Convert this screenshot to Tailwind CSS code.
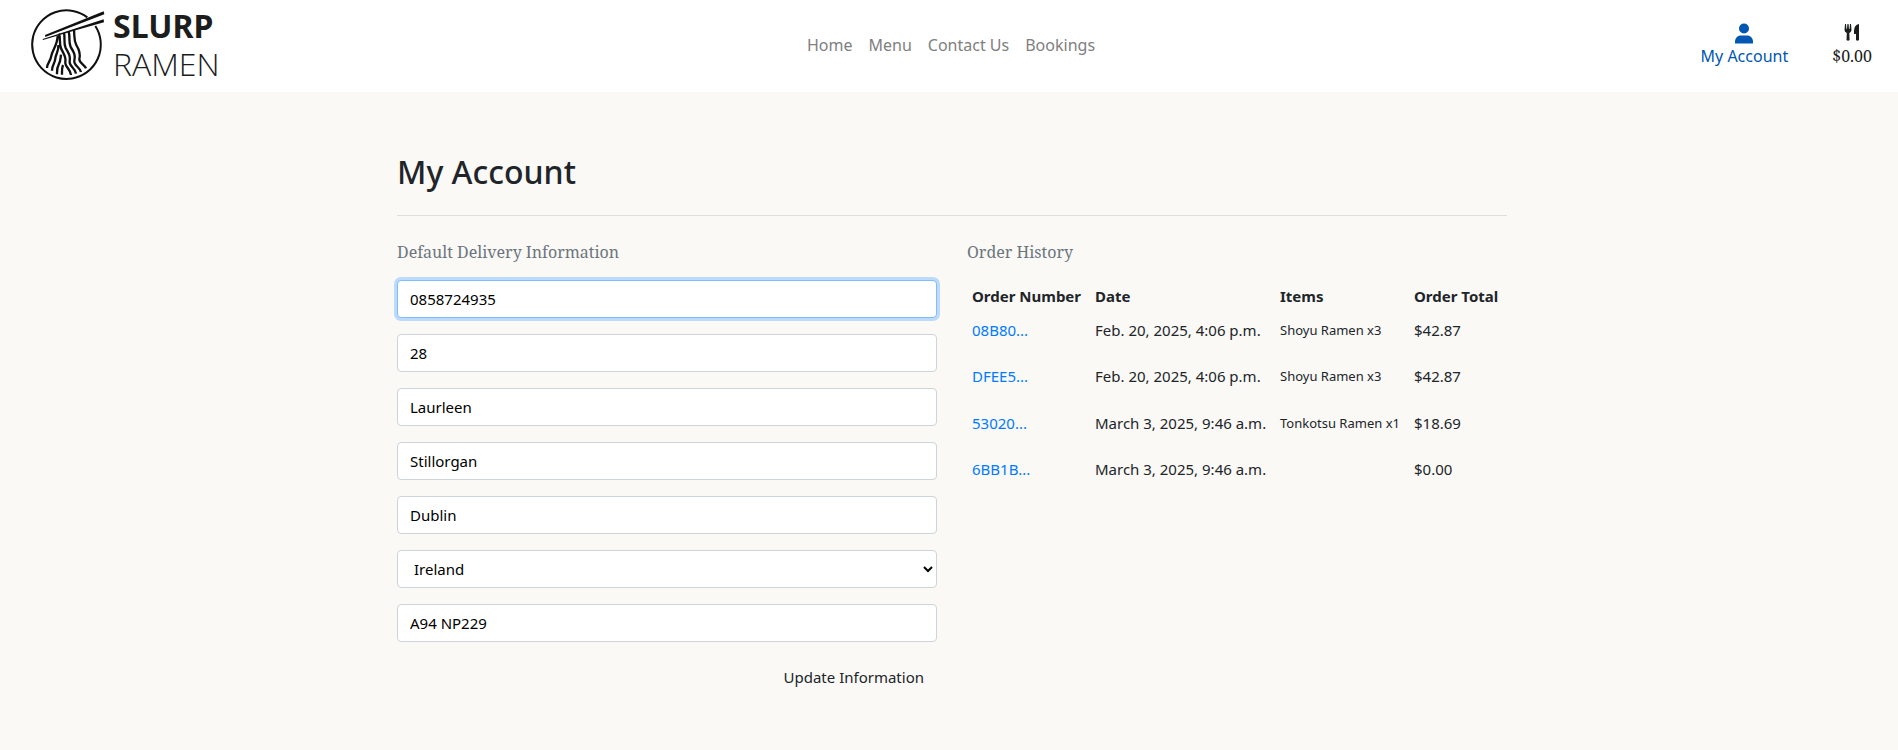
<!DOCTYPE html>
<html lang="en">
<head>
<meta charset="utf-8">
<meta name="viewport" content="width=device-width, initial-scale=1">
<title>Slurp Ramen - My Account</title>
<script src="https://cdn.jsdelivr.net/npm/@tailwindcss/browser@4"></script>
</head>
<body class="min-h-screen bg-[#faf9f6] font-['Noto_Sans',sans-serif] text-base text-[#212529]">
<header class="grid h-[92px] grid-cols-[1fr_auto_1fr] items-center bg-white pb-[2px]">
  <a href="#" class="flex items-center pl-[25px] text-[#1c1d1d]" aria-label="Slurp Ramen">
    <svg class="h-20 w-[85px]" viewBox="0 0 255 240" fill="none" stroke="#111" stroke-width="6" aria-hidden="true">
      <path d="M187 37A103 103 0 1 0 211 63"/>
      <path d="M60 90L236 19L238 28L61 96Z" fill="#111" stroke="none"/>
      <path d="M53 102L100 87L236 43L237 52L147 77L54 105Z" fill="#111" stroke="none"/>
      <path stroke-width="7" d="M98 92C98 118 82 136 79 152C77 170 66 174 66 189M100 120C102 138 92 148 91 160C90 176 81 180 81 197M108 149C106 163 107 169 101 179C95 189 96 197 96 208M114 180C110 190 111 198 111 209M102 86C108 106 102 116 108 130C116 148 124 155 121 170C118 184 137 192 138 210M117 83C121 102 115 114 122 129C132 146 137 154 134 170C132 183 151 189 153 206M131 79C136 98 130 111 137 126C148 143 152 152 148 168C146 181 165 187 168 201M147 75C149 95 146 105 154 120C165 138 167 148 163 162C162 174 179 179 183 190"/>
    </svg>
    <span class="ml-[3px] flex flex-col text-[32px] leading-[38px]">
      <span class="font-bold">SLURP</span>
      <span class="font-['Open_Sans','Noto_Sans',sans-serif] font-light">RAMEN</span>
    </span>
  </a>
  <nav class="flex gap-4 pl-1 text-[#808080]">
    <a href="#">Home</a><a href="#">Menu</a><a href="#">Contact Us</a><a href="#">Bookings</a>
  </nav>
  <div class="flex items-end justify-end gap-11 pr-[26px] leading-6">
    <a href="#" class="flex flex-col items-center text-[#0056b3]">
      <svg class="h-[21px] w-[18px]" viewBox="0 0 18 21" fill="currentColor" aria-hidden="true"><circle cx="9" cy="5.5" r="5"/><path d="M0 20.5V19C0 15 2.5 12.5 6 12.5H12C15.5 12.5 18 15 18 19V20.5Z"/></svg>
      <span>My Account</span>
    </a>
    <a href="#" class="flex flex-col items-center text-[#1c1d1d]">
      <svg class="mb-[3px] h-[17px] w-4" viewBox="0 0 16 17" fill="currentColor" aria-hidden="true"><path d="M1 0H2L2.5 5H3L3.4 0H4.6L5 5H5.5L6 0H7L7.5 6Q7.5 8 5.3 9L5.600 16Q4 17.5 2.5 16L2.8 9Q.5 8 .5 6ZM15 0V16Q13.5 17.5 12 16V10H10V7Q10 1 15 0Z"/></svg>
      <span class="font-['Noto_Serif','Liberation_Serif',serif]">$0.00</span>
    </a>
  </div>
</header>
<main class="mx-auto max-w-[1116px] pl-1.5">
  <h1 class="border-b border-[#e0dfdd] pt-[61px] pb-[24px] text-[32px] leading-[38px] font-medium">My Account</h1>
  <div class="grid grid-cols-2 gap-[30px] pt-[24px]">
    <section>
      <h2 class="font-['Noto_Serif','Liberation_Serif',serif] leading-6 text-[#6c757d]">Default Delivery Information</h2>
      <form class="mt-4 flex flex-col gap-4 text-[15px] text-black">
        <input aria-label="Phone Number" value="0858724935" class="h-[38px] w-full rounded border border-[#80bdff] bg-white px-3 shadow-[0_0_0_3px_#bcdaf9] outline-none">
        <input aria-label="Street Address 1" value="28" class="h-[38px] w-full rounded border border-[#ced4da] bg-white px-3">
        <input aria-label="Street Address 2" value="Laurleen" class="h-[38px] w-full rounded border border-[#ced4da] bg-white px-3">
        <input aria-label="Town or City" value="Stillorgan" class="h-[38px] w-full rounded border border-[#ced4da] bg-white px-3">
        <input aria-label="County" value="Dublin" class="h-[38px] w-full rounded border border-[#ced4da] bg-white px-3">
        <select aria-label="Country" class="h-[38px] w-full rounded border border-[#ced4da] bg-white pl-3"><option>Ireland</option></select>
        <input aria-label="Postal Code" value="A94 NP229" class="h-[38px] w-full rounded border border-[#ced4da] bg-white px-3">
        <button type="submit" class="h-[38px] self-end px-[13px] text-[#212529]">Update Information</button>
      </form>
    </section>
    <section>
      <h2 class="font-['Noto_Serif','Liberation_Serif',serif] leading-6 text-[#6c757d]">Order History</h2>
      <table class="mt-[15px] w-full table-fixed text-left text-[15px] leading-6 whitespace-nowrap">
        <colgroup><col class="w-[123px]"><col class="w-[185px]"><col class="w-[134px]"><col></colgroup>
        <thead><tr class="h-[34px]"><th class="px-[5px]">Order Number</th><th class="px-[5px]">Date</th><th class="px-[5px]">Items</th><th class="px-[5px]">Order Total</th></tr></thead>
        <tbody class="align-top">
          <tr class="h-[46px]"><td class="p-[5px]"><a href="#" class="text-[#007bff]">08B80...</a></td><td class="p-[5px]">Feb. 20, 2025, 4:06 p.m.</td><td class="p-[5px] text-[13px]">Shoyu Ramen x3</td><td class="p-[5px]">$42.87</td></tr>
          <tr class="h-[47px]"><td class="p-[5px]"><a href="#" class="text-[#007bff]">DFEE5...</a></td><td class="p-[5px]">Feb. 20, 2025, 4:06 p.m.</td><td class="p-[5px] text-[13px]">Shoyu Ramen x3</td><td class="p-[5px]">$42.87</td></tr>
          <tr class="h-[46px]"><td class="p-[5px]"><a href="#" class="text-[#007bff]">53020...</a></td><td class="p-[5px]">March 3, 2025, 9:46 a.m.</td><td class="p-[5px] text-[13px]">Tonkotsu Ramen x1</td><td class="p-[5px]">$18.69</td></tr>
          <tr class="h-[46px]"><td class="p-[5px]"><a href="#" class="text-[#007bff]">6BB1B...</a></td><td class="p-[5px]">March 3, 2025, 9:46 a.m.</td><td class="p-[5px]"></td><td class="p-[5px]">$0.00</td></tr>
        </tbody>
      </table>
    </section>
  </div>
</main>
</body>
</html>
